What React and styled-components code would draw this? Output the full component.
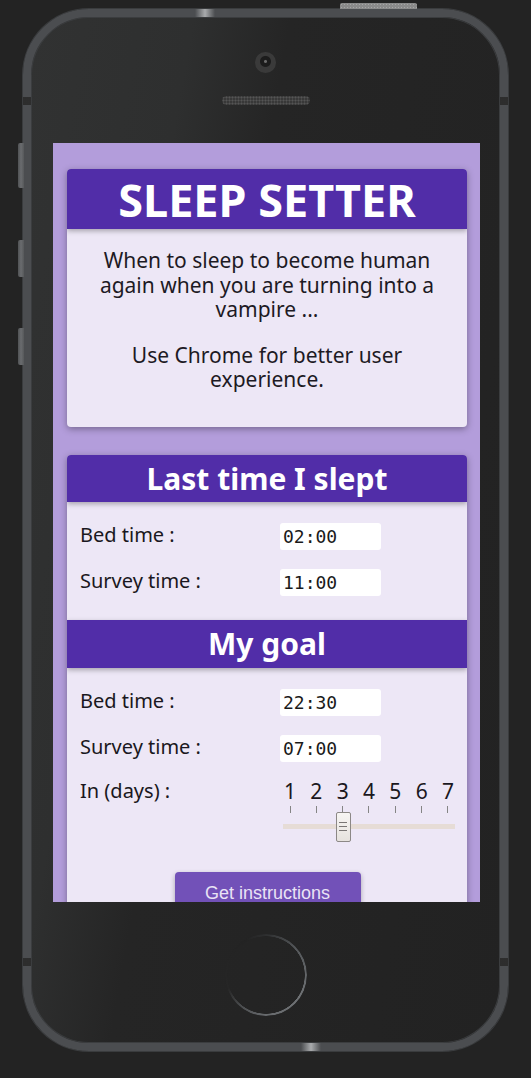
import styled, { createGlobalStyle } from "styled-components";

const GlobalStyle = createGlobalStyle`
  html, body {
    margin: 0;
    padding: 0;
  }
  body {
    background: #232323;
    font-family: "Noto Sans", "DejaVu Sans", sans-serif;
  }
`;

const Stage = styled.div`
  width: 531px;
  height: 1078px;
  padding: 9px 0 0 23px;
  box-sizing: border-box;
  overflow: hidden;
`;

const Phone = styled.div`
  position: relative;
  width: 485px;
  height: 1042px;
  box-sizing: border-box;
  border: 8px solid #4b4d50;
  border-radius: 66px;
  background: linear-gradient(100deg, #313232 0%, #2e2f2f 25%, #252525 40%, #222 100%);
  box-shadow: 0 0 0 1px #3a3c3e, inset 0 0 0 1px #3b3d3f;
  display: flex;
  flex-direction: column;
  align-items: center;
`;

const TopBezel = styled.div`
  height: 126px;
  display: flex;
  flex-direction: column;
  align-items: center;
  padding-top: 35px;
  box-sizing: border-box;
`;

const Camera = styled.div`
  width: 21px;
  height: 21px;
  border-radius: 50%;
  background: radial-gradient(circle at 50% 45%, #6a6a6a 0 1px, #1c1c1c 2px 5px, #3a3a3a 6px);
`;

const Speaker = styled.div`
  margin-top: 23px;
  width: 88px;
  height: 9px;
  border-radius: 5px;
  background-color: #383838;
  background-image: radial-gradient(#555 0.8px, transparent 1.2px);
  background-size: 3px 3px;
`;

const Screen = styled.div`
  width: 427px;
  height: 759px;
  margin-left: 2px;
  background: #b39ddb;
  overflow: hidden;
  padding: 26px 13px 0 14px;
  box-sizing: border-box;
`;

const HomeArea = styled.div`
  flex: 1;
  display: flex;
  justify-content: center;
  padding-top: 32px;
`;

const HomeButton = styled.div`
  width: 82px;
  height: 82px;
  border-radius: 50%;
  background: conic-gradient(
    from 0deg,
    #2e2f30 0deg,
    #55585b 50deg,
    #6e7174 120deg,
    #686b6e 180deg,
    #4a4c4e 220deg,
    #262626 250deg,
    #232323 330deg,
    #2e2f30 360deg
  );
  -webkit-mask: radial-gradient(circle, transparent 38.5px, #000 39px);
  mask: radial-gradient(circle, transparent 38.5px, #000 39px);
`;

const SideButton = styled.div`
  position: absolute;
  left: -13px;
  top: ${(p) => p.$top}px;
  width: 6px;
  height: ${(p) => p.$h}px;
  border-radius: 2px 0 0 2px;
  background: linear-gradient(90deg, #505254, #6a6c6f 50%, #56585a);
`;

const TopButton = styled.div`
  position: absolute;
  left: 309px;
  top: -14px;
  width: 77px;
  height: 6px;
  border-radius: 2px 2px 0 0;
  background-color: #8a8a8a;
  background-image: radial-gradient(#a6a6a6 0.7px, transparent 1px);
  background-size: 3px 3px;
`;

const Band = styled.div`
  position: absolute;
  top: ${(p) => p.$top}px;
  ${(p) => (p.$right ? "right: -8px;" : "left: -8px;")}
  width: 8px;
  height: 8px;
  background-color: #1d1d1d;
  background-image: radial-gradient(#333 0.6px, transparent 1px);
  background-size: 2px 2px;
`;

const Glint = styled.div`
  position: absolute;
  left: ${(p) => p.$left}px;
  ${(p) => (p.$bottom ? "bottom: -8px;" : "top: -8px;")}
  width: 20px;
  height: 8px;
  background: linear-gradient(90deg, #4b4d50, #a9abad 50%, #4b4d50);
`;

const Card = styled.section`
  background: #ede7f6;
  border-radius: 4px;
  box-shadow: 0 2px 7px rgba(0, 0, 0, 0.35);
  overflow: hidden;

  & + & {
    margin-top: 28px;
  }
`;

const Header = styled.h2`
  margin: 0;
  position: relative;
  z-index: 1;
  height: ${(p) => p.$h}px;
  display: flex;
  align-items: center;
  justify-content: center;
  background: #512da8;
  color: #fff;
  font-size: ${(p) => p.$size}px;
  font-weight: 700;
  box-shadow: 0 2px 5px rgba(0, 0, 0, 0.3);
`;

const Intro = styled.div`
  padding: 19px 20px 35px;
  text-align: center;
  color: #1d1a24;
  font-size: 21px;
  line-height: 24.5px;

  p {
    margin: 0;
  }
  p + p {
    margin-top: 21px;
  }
`;

const Form = styled.div`
  display: grid;
  grid-template-columns: 200px 1fr;
  align-items: center;
  row-gap: 19px;
  padding: 21px 13px 24px;
`;

const Label = styled.label`
  font-size: 20px;
  line-height: 23px;
  color: #1a1720;
  align-self: ${(p) => (p.$top ? "start" : "center")};
  position: relative;
  top: -2px;
`;

const TimeBox = styled.input`
  width: 101px;
  height: 27px;
  box-sizing: border-box;
  border: none;
  border-radius: 3px;
  background: #fff;
  padding: 0 3px;
  font-family: "DejaVu Sans Mono", "Liberation Mono", monospace;
  font-size: 18px;
  color: #1a1a1a;
  outline: none;
`;

const Slider = styled.div`
  width: 172px;
  margin-left: 3px;
  align-self: start;
`;

const Ticks = styled.div`
  display: flex;
  justify-content: space-between;
  margin-top: -2px;
`;

const Tick = styled.div`
  width: 14px;
  display: flex;
  flex-direction: column;
  align-items: center;
  font-size: 21px;
  line-height: 24px;
  color: #1a1720;

  &::after {
    content: "";
    width: 1px;
    height: 7px;
    margin-top: 3px;
    background: #858585;
  }
`;

const Track = styled.div`
  position: relative;
  margin-top: 11px;
  height: 5px;
  background: #e6dcd6;
`;

const Thumb = styled.div`
  position: absolute;
  top: -12px;
  width: 15px;
  height: 30px;
  box-sizing: border-box;
  border: 1px solid #8c8886;
  border-radius: 2px;
  background: linear-gradient(#f7f5f3, #e6e2de);
  display: flex;
  flex-direction: column;
  align-items: center;
  justify-content: center;
  gap: 3px;

  span {
    width: 8px;
    height: 1px;
    background: #7a7675;
  }
`;

const ButtonRow = styled.div`
  grid-column: 1 / -1;
  display: flex;
  justify-content: center;
  margin-top: 24px;
`;

const Button = styled.button`
  width: 186px;
  padding: 11px 0 12px;
  border: none;
  border-radius: 4px;
  background: #7251b8;
  color: #e9e3f5;
  font-family: "Liberation Sans", Arial, sans-serif;
  font-size: 18px;
  box-shadow: 0 2px 5px rgba(0, 0, 0, 0.3);
  cursor: pointer;
`;

const days = [1, 2, 3, 4, 5, 6, 7];

function DaySlider({ value }) {
  const left = ((value - 1) / (days.length - 1)) * (172 - 14);
  return (
    <Slider>
      <Ticks>
        {days.map((d) => (
          <Tick key={d}>{d}</Tick>
        ))}
      </Ticks>
      <Track>
        <Thumb style={{ left }}>
          <span />
          <span />
          <span />
        </Thumb>
      </Track>
    </Slider>
  );
}

function TimeRow({ label, value }) {
  return (
    <>
      <Label>{label}</Label>
      <TimeBox type="text" readOnly value={value} />
    </>
  );
}

export default function App() {
  return (
    <Stage>
      <GlobalStyle />
      <Phone>
        <TopButton />
        <SideButton $top={126} $h={45} />
        <SideButton $top={223} $h={37} />
        <SideButton $top={311} $h={37} />
        <Band $top={80} />
        <Band $top={80} $right />
        <Band $top={941} />
        <Band $top={941} $right />
        <Glint $left={164} />
        <Glint $left={270} $bottom />

        <TopBezel>
          <Camera />
          <Speaker />
        </TopBezel>

        <Screen>
          <Card>
            <Header $h={60} $size={45}>SLEEP SETTER</Header>
            <Intro>
              <p>When to sleep to become human again when you are turning into a vampire ...</p>
              <p>Use Chrome for better user experience.</p>
            </Intro>
          </Card>

          <Card>
            <Header $h={47} $size={30}>Last time I slept</Header>
            <Form>
              <TimeRow label="Bed time :" value="02:00" />
              <TimeRow label="Survey time :" value="11:00" />
            </Form>
            <Header $h={48} $size={30}>My goal</Header>
            <Form>
              <TimeRow label="Bed time :" value="22:30" />
              <TimeRow label="Survey time :" value="07:00" />
              <Label $top>In (days) :</Label>
              <DaySlider value={3} />
              <ButtonRow>
                <Button>Get instructions</Button>
              </ButtonRow>
            </Form>
          </Card>
        </Screen>

        <HomeArea>
          <HomeButton />
        </HomeArea>
      </Phone>
    </Stage>
  );
}
